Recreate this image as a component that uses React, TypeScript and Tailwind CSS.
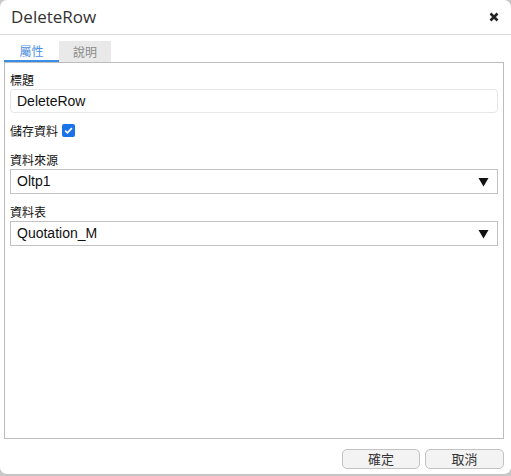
import React from "react";

const cjk = { fontFamily: '"Noto Sans CJK TC", "Noto Sans", sans-serif' };
const latin = { fontFamily: '"Liberation Sans", "Noto Sans CJK TC", sans-serif' };

function Triangle() {
  return (
    <svg width="11" height="10" viewBox="0 0 11 10">
      <polygon points="0.5,1 10.5,1 5.5,9.5" fill="#111" />
    </svg>
  );
}

function Select({ value }: { value: string }) {
  return (
    <div className="flex h-[25px] items-center justify-between border border-[#c2c2c2] bg-white pl-[6px] pr-[8px]">
      <span className="text-[14px] text-[#111]" style={latin}>{value}</span>
      <Triangle />
    </div>
  );
}

export default function App() {
  return (
    <div className="h-[476px] w-[511px] bg-[#c8c8c8]">
      <div className="flex h-[475px] w-[511px] flex-col rounded-[7px] border-b border-[#c4c4c4] bg-white">
        <div className="flex h-[35px] shrink-0 items-center justify-between border-b border-[#dcdcdc] pl-[11px] pr-[12px]">
          <span className="text-[17px] text-[#333] pb-[1px]" style={{ fontFamily: '"Open Sans", "Noto Sans", sans-serif' }}>DeleteRow</span>
          <svg width="10" height="10" viewBox="0 0 10 10" className="mb-[1px]">
            <path d="M1.5 1.5 L8.5 8.5 M8.5 1.5 L1.5 8.5" stroke="#222" strokeWidth="2.6" strokeLinecap="butt" />
          </svg>
        </div>
        <div className="flex flex-1 flex-col px-[4px] pt-[6px]">
          <div className="flex h-[21px] shrink-0">
            <div className="flex w-[55px] items-center justify-center border-b-2 border-[#3b8ee8] text-[12px] text-[#4d8fe0]" style={cjk}>屬性</div>
            <div className="flex w-[52px] items-center justify-center bg-[#e9e9e9] text-[12px] text-[#8a8a8a]" style={cjk}>說明</div>
          </div>
          <div className="flex h-[377px] w-[500px] flex-col border border-[#bcbcbc] px-[5px] pt-[8px]">
            <div className="h-[17px] text-[12px] leading-[17px] text-[#111]" style={cjk}>標題</div>
            <div className="mt-[1px] flex h-[24px] items-center rounded-[4px] border border-[#e6e6e6] pl-[6px]">
              <span className="text-[14px] text-[#111]" style={latin}>DeleteRow</span>
            </div>
            <div className="mt-[9px] flex h-[17px] items-center gap-[4px]">
              <span className="text-[12px] leading-[17px] text-[#111]" style={cjk}>儲存資料</span>
              <div className="flex h-[13px] w-[13px] items-center justify-center rounded-[2px] bg-[#1a73e8]">
                <svg width="11" height="11" viewBox="0 0 11 11">
                  <path d="M2.2 5.6 L4.5 7.8 L8.9 3.2" stroke="#fff" strokeWidth="1.8" fill="none" />
                </svg>
              </div>
            </div>
            <div className="mt-[12px] h-[17px] text-[12px] leading-[17px] text-[#111]" style={cjk}>資料來源</div>
            <div className="mt-[1px]">
              <Select value="Oltp1" />
            </div>
            <div className="mt-[9px] h-[17px] text-[12px] leading-[17px] text-[#111]" style={cjk}>資料表</div>
            <div className="mt-[1px]">
              <Select value="Quotation_M" />
            </div>
          </div>
          <div className="flex justify-end gap-[5px] pr-[3px] pt-[10px]">
            <div className="flex h-[20px] w-[78px] items-center justify-center rounded-[5px] border border-[#c2c2c2] bg-[#f3f3f3] text-[13px] text-[#333]" style={cjk}>確定</div>
            <div className="flex h-[20px] w-[79px] items-center justify-center rounded-[5px] border border-[#c2c2c2] bg-[#f3f3f3] text-[13px] text-[#333]" style={cjk}>取消</div>
          </div>
        </div>
      </div>
    </div>
  );
}
